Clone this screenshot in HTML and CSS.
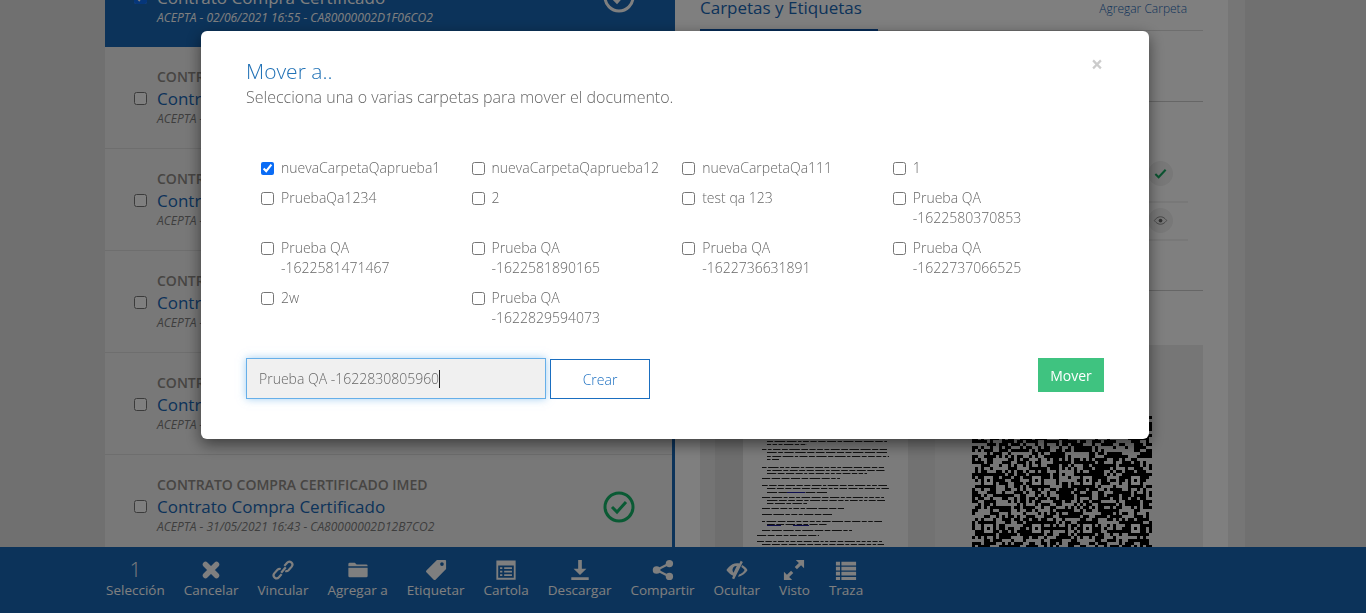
FILE: index.html
```html
<!DOCTYPE html>
<html lang="es">
<head>
    <meta charset="UTF-8">
    <title>Mover a..</title>
    <link rel="stylesheet" href="styles.css">
</head>
<body>
<div class="page">
    <div class="main">
        <ul class="docs">
            <li class="doc doc-active">
                <input type="checkbox" checked>
                <div class="doc-text">
                    <p class="doc-type">CONTRATO COMPRA CERTIFICADO IMED</p>
                    <p class="doc-name">Contrato Compra Certificado</p>
                    <p class="doc-meta">ACEPTA - 02/06/2021 16:55 - CA80000002D1F06CO2</p>
                </div>
                <svg class="doc-ok" viewBox="0 0 32 32"><circle cx="16" cy="16" r="14"/><path d="M9 16l5 5 9-10"/></svg>
            </li>
            <li class="doc">
                <input type="checkbox">
                <div class="doc-text">
                    <p class="doc-type">CONTRATO COMPRA CERTIFICADO IMED</p>
                    <p class="doc-name">Contrato Compra Certificado</p>
                    <p class="doc-meta">ACEPTA - 02/06/2021 16:50 - CA80000002D1F05CO2</p>
                </div>
            </li>
            <li class="doc">
                <input type="checkbox">
                <div class="doc-text">
                    <p class="doc-type">CONTRATO COMPRA CERTIFICADO IMED</p>
                    <p class="doc-name">Contrato Compra Certificado</p>
                    <p class="doc-meta">ACEPTA - 02/06/2021 16:48 - CA80000002D1F04CO2</p>
                </div>
            </li>
            <li class="doc">
                <input type="checkbox">
                <div class="doc-text">
                    <p class="doc-type">CONTRATO COMPRA CERTIFICADO IMED</p>
                    <p class="doc-name">Contrato Compra Certificado</p>
                    <p class="doc-meta">ACEPTA - 01/06/2021 10:12 - CA80000002D1F03CO2</p>
                </div>
            </li>
            <li class="doc">
                <input type="checkbox">
                <div class="doc-text">
                    <p class="doc-type">CONTRATO COMPRA CERTIFICADO IMED</p>
                    <p class="doc-name">Contrato Compra Certificado</p>
                    <p class="doc-meta">ACEPTA - 01/06/2021 09:37 - CA80000002D1F02CO2</p>
                </div>
            </li>
            <li class="doc">
                <input type="checkbox">
                <div class="doc-text">
                    <p class="doc-type">CONTRATO COMPRA CERTIFICADO IMED</p>
                    <p class="doc-name">Contrato Compra Certificado</p>
                    <p class="doc-meta">ACEPTA - 31/05/2021 16:43 - CA80000002D12B7CO2</p>
                </div>
                <svg class="doc-ok" viewBox="0 0 32 32"><circle cx="16" cy="16" r="14"/><path d="M9 16l5 5 9-10"/></svg>
            </li>
        </ul>

        <div class="detail">
            <div class="tabs">
                <span class="tab">Carpetas y Etiquetas</span>
                <a class="add-folder">Agregar Carpeta</a>
            </div>
            <div class="block-top"></div>
            <div class="block-status">
                <div class="status-row">
                    <span class="status-dot">
                        <svg viewBox="0 0 16 16"><path class="ico-check" d="M2.500 8.500l3.500 3.500 7.500-8"/></svg>
                    </span>
                </div>
                <div class="status-row">
                    <span class="status-dot">
                        <svg viewBox="0 0 16 16"><path class="ico-eye" d="M1.500 8s2.500-4 6.500-4 6.500 4 6.500 4-2.500 4-6.500 4-6.500-4-6.500-4z"/><circle class="ico-pupil" cx="8" cy="8" r="2"/></svg>
                    </span>
                </div>
            </div>
            <div class="preview">
                <div class="paper-wrap">
                    <div class="paper" id="paper"></div>
                </div>
                <div class="qr-wrap">
                    <div class="qr" id="qr"></div>
                </div>
            </div>
        </div>
        <div class="strip"></div>
    </div>

    <div class="actions">
        <a class="action"><span class="action-count">1</span>Selección</a>
        <a class="action"><svg viewBox="0 0 24 24"><path class="line thick" d="M6 6l12 12M18 6L6 18"/></svg>Cancelar</a>
        <a class="action"><svg viewBox="0 0 24 24"><path class="line" d="M10 15l5-6"/><path class="line" d="M13.500 7.500l3-3.500a3.300 3.300 0 0 1 5 4.300l-3.500 4a3.300 3.300 0 0 1-3.500.800"/><path class="line" d="M10.500 16.500l-3 3.500a3.300 3.300 0 0 1-5-4.300l3.500-4a3.300 3.300 0 0 1 3.500-.800"/></svg>Vincular</a>
        <a class="action"><svg viewBox="0 0 24 24"><path class="fill" d="M1.500 5.500A1.500 1.500 0 0 1 3 4h5.500l2 2H21a1.500 1.500 0 0 1 1.500 1.500v.500h-21zM1.500 9.500h21v9A1.500 1.500 0 0 1 21 20H3a1.500 1.500 0 0 1-1.500-1.500z"/></svg>Agregar a</a>
        <a class="action"><svg viewBox="0 0 24 24"><path class="fill" fill-rule="evenodd" d="M13 1h9a1 1 0 0 1 1 1v9L11.500 22.500a1.500 1.500 0 0 1-2 0L1.500 14.500a1.500 1.500 0 0 1 0-2zM18.500 3.500a2 2 0 1 0 0 4 2 2 0 0 0 0-4z"/></svg>Etiquetar</a>
        <a class="action"><svg viewBox="0 0 24 24"><path class="fill" fill-rule="evenodd" d="M1.500 1.500h21v21h-21zM3.500 7v13.500h17V7zM5.500 9h2.500v2H5.500zM10 9h8.500v2H10zM5.500 12.800h2.500v2H5.500zM10 12.800h8.500v2H10zM5.500 16.500h2.500v2H5.500zM10 16.500h8.500v2H10z"/></svg>Cartola</a>
        <a class="action"><svg viewBox="0 0 24 24"><path class="fill" d="M10 1h4v9.500h5l-7 7-7-7h5zM2.500 20h19v3h-19z"/></svg>Descargar</a>
        <a class="action"><svg viewBox="0 0 24 24"><circle class="fill" cx="19" cy="5" r="4"/><circle class="fill" cx="19" cy="19" r="4"/><circle class="fill" cx="5" cy="12" r="4.200"/><path class="line" d="M19 5L5 12l14 7"/></svg>Compartir</a>
        <a class="action"><svg viewBox="0 0 24 24"><path class="fill" fill-rule="evenodd" d="M0.500 12s4-7.500 11.500-7.500c1 0 1.700.100 2.600.300L16 2l2.400 1.200-9.500 19L6.500 21l1.300-2.600C3.500 16.500.500 12 .500 12zM9.500 8a4.500 4.500 0 0 0-1.300 7l3.500-7.300A4 4 0 0 0 9.500 8zM17.500 6.500c3.700 1.700 6 5.500 6 5.500s-3.500 6.500-10.500 7.400l1.300-2.500c2.700-.700 4.800-2.600 6-4.900-.700-1.300-2-2.600-3.600-3.400z"/></svg>Ocultar</a>
        <a class="action"><svg viewBox="0 0 24 24"><path class="fill" d="M14 1h9v9l-3.300-3.300-4.500 4.500-2.400-2.400 4.500-4.500zM10 23H1v-9l3.300 3.300 4.500-4.500 2.400 2.400-4.500 4.500z"/></svg>Visto</a>
        <a class="action"><svg viewBox="0 0 24 24"><path class="fill" d="M1 3h4.500v4H1zM7 3h16v4H7zM1 8.500h4.500v4H1zM7 8.500h16v4H7zM1 14h4.500v4H1zM7 14h16v4H7zM1 19.500h4.500v3.500H1zM7 19.500h16v3.500H7z"/></svg>Traza</a>
    </div>
</div>

<div class="backdrop">
    <div class="modal">
        <span class="modal-close">×</span>
        <h2 class="modal-title">Mover a..</h2>
        <p class="modal-sub">Selecciona una o varias carpetas para mover el documento.</p>

        <div class="folders">
            <label class="folder"><input type="checkbox" checked><span>nuevaCarpetaQaprueba1</span></label>
            <label class="folder"><input type="checkbox"><span>nuevaCarpetaQaprueba12</span></label>
            <label class="folder"><input type="checkbox"><span>nuevaCarpetaQa111</span></label>
            <label class="folder"><input type="checkbox"><span>1</span></label>
            <label class="folder"><input type="checkbox"><span>PruebaQa1234</span></label>
            <label class="folder"><input type="checkbox"><span>2</span></label>
            <label class="folder"><input type="checkbox"><span>test qa 123</span></label>
            <label class="folder"><input type="checkbox"><span>Prueba QA -1622580370853</span></label>
            <label class="folder"><input type="checkbox"><span>Prueba QA -1622581471467</span></label>
            <label class="folder"><input type="checkbox"><span>Prueba QA -1622581890165</span></label>
            <label class="folder"><input type="checkbox"><span>Prueba QA -1622736631891</span></label>
            <label class="folder"><input type="checkbox"><span>Prueba QA -1622737066525</span></label>
            <label class="folder"><input type="checkbox"><span>2w</span></label>
            <label class="folder"><input type="checkbox"><span>Prueba QA -1622829594073</span></label>
        </div>

        <div class="modal-foot">
            <div class="new-folder"><span>Prueba QA -1622830805960</span><i class="caret"></i></div>
            <button class="btn-create">Crear</button>
            <button class="btn-move">Mover</button>
        </div>
    </div>
</div>
<script src="script.js"></script>
</body>
</html>
```

FILE: styles.css
```css
* {
    margin: 0;
    padding: 0;
    box-sizing: border-box;
}

ul, li {
    list-style: none;
}

html, body {
    width: 100%;
    height: 100%;
    overflow: hidden;
}

body {
    font-family: "Open Sans", "Liberation Sans", sans-serif;
    background: #e0e0e0;
}

input[type="checkbox"] {
    flex: none;
    width: 13px;
    height: 13px;
    margin: 0;
    accent-color: #0a6cf5;
}

.page {
    display: flex;
    flex-direction: column;
    height: 100%;
}

.main {
    flex: 1;
    min-height: 0;
    display: flex;
    padding-left: 105px;
    overflow: hidden;
}

/* lista de documentos */
.docs {
    flex: none;
    width: 570px;
    margin-top: -55px;
    border-right: 3px solid #1866b4;
}

.doc {
    position: relative;
    height: 102px;
    display: flex;
    align-items: center;
    padding-left: 29px;
    background: #f0f0f0;
    border-bottom: 1px solid #dcdcdc;
}

.doc input {
    margin-top: 2px;
}

.doc-active {
    background: #1866b4;
    border-bottom: 0;
}

.doc-text {
    margin-left: 10px;
}

.doc-type {
    margin-bottom: 2px;
    font-size: 14px;
    line-height: 15px;
    font-weight: 600;
    color: #8e8a86;
}

.doc-name {
    font-size: 17px;
    line-height: 26px;
    color: #1866b4;
}

.doc-meta {
    font-size: 12px;
    line-height: 14px;
    font-style: italic;
    color: #7c7c7c;
}

.doc-active .doc-type,
.doc-active .doc-name,
.doc-active .doc-meta {
    color: #fff;
}

.doc-ok {
    position: absolute;
    left: 498px;
    top: 36px;
    width: 32px;
    height: 32px;
    fill: none;
    stroke: #15b568;
    stroke-width: 3;
}

.doc-active .doc-ok {
    stroke: #fff;
}

/* panel derecho */
.detail {
    flex: none;
    width: 553px;
    display: flex;
    flex-direction: column;
    padding: 0 25px;
    background: #fff;
}

.tabs {
    flex: none;
    height: 31px;
    display: flex;
    justify-content: space-between;
    border-bottom: 1px solid #ddd;
}

.tab {
    width: 178px;
    height: 32px;
    font-size: 17px;
    line-height: 15px;
    color: #1866b4;
    border-bottom: 3px solid #0c55aa;
}

.add-folder {
    margin: 1px 16px 0 0;
    font-size: 12px;
    line-height: 16px;
    font-weight: 300;
    color: #1866b4;
}

.block-top {
    flex: none;
    height: 71px;
    border-bottom: 1px solid #ccc;
}

.block-status {
    flex: none;
    height: 189px;
    padding: 59px 15px 0 0;
    border-bottom: 1px solid #ccc;
}

.status-row {
    height: 42px;
    padding-right: 15px;
    display: flex;
    align-items: flex-start;
    justify-content: flex-end;
    border-bottom: 2px solid #f0f0f0;
}

.status-row + .status-row {
    height: 38px;
    padding-top: 5px;
}

.status-dot {
    width: 25px;
    height: 25px;
    display: flex;
    align-items: center;
    justify-content: center;
    border-radius: 50%;
    background: #f0f0f0;
}

.status-dot svg {
    width: 15px;
    height: 15px;
}

.ico-check {
    fill: none;
    stroke: #17a862;
    stroke-width: 2.2;
}

.ico-eye {
    fill: none;
    stroke: #888;
    stroke-width: 1;
}

.ico-pupil {
    fill: #666;
}

.preview {
    flex: 1;
    min-height: 0;
    display: flex;
    margin-top: 54px;
    background: #ececec;
}

.paper-wrap {
    flex: none;
    width: 235px;
    padding: 0 27px 0 43px;
    background: linear-gradient(90deg, #e8e8e8 15px, #dcdcdc 15px, #dcdcdc 208px, #e4e4e4 208px);
}

.paper {
    height: 100%;
    background: #f6f6f6;
}

.paper svg {
    display: block;
    width: 165px;
    height: 202px;
    filter: blur(.7px);
}

.qr-wrap {
    flex: 1;
    padding: 68px 0 0 37px;
}

.qr svg {
    display: block;
    width: 180px;
    height: 180px;
}

.strip {
    flex: none;
    width: 17px;
    background: #ececec;
}

/* barra inferior */
.actions {
    flex: none;
    height: 66px;
    display: flex;
    gap: 19px;
    padding: 12px 0 0 106px;
    background: #1866b4;
}

.action {
    display: flex;
    flex-direction: column;
    align-items: center;
    font-size: 13.5px;
    line-height: 20px;
    color: #fff;
}

.action svg {
    width: 22px;
    height: 22px;
    margin-bottom: -1px;
    display: block;
}

.action-count {
    height: 21px;
    font-size: 20px;
    line-height: 22px;
    font-weight: 300;
}

.fill {
    fill: #fff;
}

.line {
    fill: none;
    stroke: #fff;
    stroke-width: 2.4;
}

.thick {
    stroke-width: 6;
    stroke-linecap: round;
}

/* modal */
.backdrop {
    position: fixed;
    top: 0;
    right: 0;
    bottom: 0;
    left: 0;
    display: flex;
    justify-content: center;
    align-items: flex-start;
    padding: 31px 16px 0 0;
    background: rgba(0, 0, 0, .5);
}

.modal {
    position: relative;
    width: 948px;
    height: 408px;
    padding: 26px 45px 0;
    background: #fff;
    border-radius: 6px;
    box-shadow: 0 5px 15px rgba(0, 0, 0, .5);
}

.modal-close {
    position: absolute;
    top: 22px;
    right: 46px;
    font-size: 21px;
    line-height: 22px;
    font-weight: 700;
    color: #ccc;
}

.modal-title {
    font-size: 21px;
    line-height: 28px;
    font-weight: 300;
    color: #2272b6;
}

.modal-sub {
    font-size: 16px;
    line-height: 24px;
    font-weight: 300;
    color: #666;
}

.folders {
    display: grid;
    grid-template-columns: repeat(4, 210.6px);
    margin-top: 44px;
    padding-left: 15px;
}

.folder {
    display: flex;
    align-items: flex-start;
    gap: 7px;
    padding: 5px 0;
    font-size: 14px;
    line-height: 20px;
    font-weight: 300;
    color: #666;
}

.folder input {
    margin-top: 4px;
}

.folder span {
    max-width: 170px;
}

.modal-foot {
    display: flex;
    align-items: flex-start;
    margin-top: 25px;
}

.new-folder {
    width: 300px;
    height: 41px;
    display: flex;
    align-items: center;
    padding-left: 12px;
    font-size: 14px;
    font-weight: 300;
    color: #666;
    background: #f0f0f0;
    border: 1px solid #66afe9;
    box-shadow: 0 0 8px rgba(102, 175, 233, .6);
}

.caret {
    width: 1px;
    height: 18px;
    background: #222;
}

.btn-create {
    width: 100px;
    height: 40px;
    margin: 1px 0 0 4px;
    font: 300 14px "Open Sans", "Liberation Sans", sans-serif;
    color: #1a6ec0;
    background: #fff;
    border: 1px solid #1a6ec0;
}

.btn-move {
    width: 66px;
    height: 34px;
    margin-left: auto;
    font: 14px "Open Sans", "Liberation Sans", sans-serif;
    color: #fff;
    background: #3fc380;
    border: 0;
}
```

FILE: script.js
```js
// el QR y la hoja del contrato se dibujan con rectangulos, no hay imagenes
var SVG_NS = "http://www.w3.org/2000/svg";

function makeSvg(w, h) {
    var svg = document.createElementNS(SVG_NS, "svg");
    svg.setAttribute("viewBox", "0 0 " + w + " " + h);
    return svg;
}

function addRect(svg, x, y, w, h, color) {
    var r = document.createElementNS(SVG_NS, "rect");
    r.setAttribute("x", x);
    r.setAttribute("y", y);
    r.setAttribute("width", w);
    r.setAttribute("height", h);
    r.setAttribute("fill", color);
    svg.appendChild(r);
}

var seed = 7;

function rnd() {
    seed = (seed * 16807) % 2147483647;
    return seed / 2147483647;
}

// qr: 60 x 60 modulos de 3px
var qr = makeSvg(60, 60);

for (var y = 0; y < 60; y++) {
    for (var x = 0; x < 60; x++) {
        if (rnd() > 0.48) {
            addRect(qr, x, y, 1, 1, "#000");
        }
    }
}

// cuadros de alineacion
[5, 21, 38, 54].forEach(function (cx) {
    [22, 38].forEach(function (cy) {
        addRect(qr, cx - 2, cy - 2, 5, 5, "#000");
        addRect(qr, cx - 1, cy - 1, 3, 3, "#fff");
        addRect(qr, cx, cy, 1, 1, "#000");
    });
});
document.getElementById("qr").appendChild(qr);

// hoja: lineas de texto ilegible [x, y, ancho], y medida desde el borde de la hoja
var paperLines = [
    [24, 96, 120], [24, 99, 40],
    [19, 104, 125], [24, 107, 120], [24, 111, 122], [24, 114, 12],
    [19, 122, 122], [24, 125, 118], [24, 128, 100],
    [19, 133, 78],
    [19, 140, 125], [24, 143, 122], [24, 147, 60],
    [19, 152, 122], [24, 155, 118], [24, 158, 40],
    [19, 163, 82], [19, 169, 70],
    [19, 176, 120], [24, 179, 60],
    [19, 185, 90], [14, 190, 62],
    [14, 196, 125], [19, 199, 122]
];
var paper = makeSvg(165, 202);

paperLines.forEach(function (l) {
    // cada linea se parte en palabras
    var pos = l[0], end = l[0] + l[2];
    while (pos < end) {
        var word = Math.min(3 + rnd() * 8, end - pos);
        addRect(paper, pos, l[1], word, 1, "#222");
        pos += word + 1.5;
    }
});
addRect(paper, 44, 147, 18, 1, "#1a1aa0");
addRect(paper, 24, 180, 14, 1, "#1a1aa0");
addRect(paper, 50, 180, 16, 1, "#1a1aa0");
document.getElementById("paper").appendChild(paper);
```
